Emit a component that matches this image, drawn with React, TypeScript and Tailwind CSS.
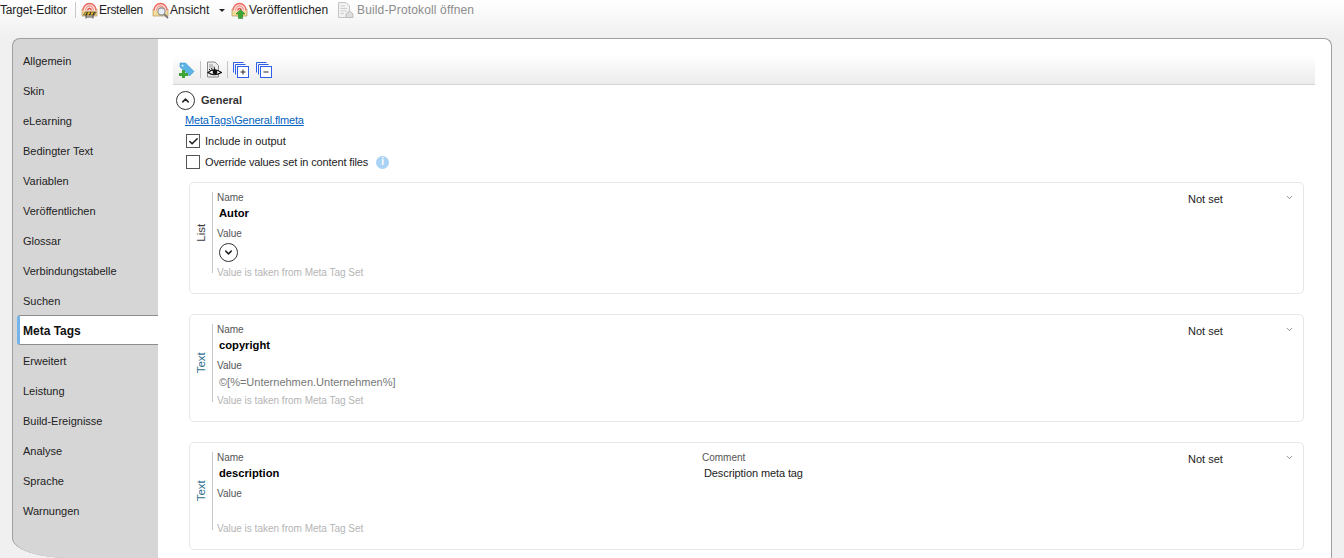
import { Check, ChevronDown, ChevronUp } from 'lucide-react';

const NAV = [
    'Allgemein',
    'Skin',
    'eLearning',
    'Bedingter Text',
    'Variablen',
    'Veröffentlichen',
    'Glossar',
    'Verbindungstabelle',
    'Suchen',
    'Meta Tags',
    'Erweitert',
    'Leistung',
    'Build-Ereignisse',
    'Analyse',
    'Sprache',
    'Warnungen',
];

/* Rainbow fan over a yellow folder, shared by the three commands; each gets its own badge. */
function TargetIcon({ badge }: { badge: 'build' | 'view' | 'publish' }) {
    return (
        <svg width="17" height="17" viewBox="0 0 17 17" className="shrink-0">
            <path d="M1 7H16V14H1Z" fill="#f5dc9a" stroke="#b3975a" strokeWidth="0.7" />
            <path d="M1.5 9A7 7.5 0 0 1 15.5 9Z" fill="#fbe3dc" />
            <path d="M2 8.5A6.5 7 0 0 1 15 8.5" fill="none" stroke="#ea6a62" strokeWidth="1.4" />
            <path d="M4.5 8.5A4 4.5 0 0 1 12.5 8.5" fill="none" stroke="#f19a90" strokeWidth="1.3" />
            <path d="M6.8 8.5A1.7 2 0 0 1 10.2 8.5" fill="none" stroke="#e5574f" strokeWidth="1.3" />
            {badge === 'build' && (
                <>
                    <path d="M4 10H15L13.5 13H2.5Z" fill="#f2c230" stroke="#333" strokeWidth="0.6" />
                    <path d="M6.5 10.3 5 13M10 10.3 8.5 13M13.5 10.3 12 13" stroke="#222" strokeWidth="1.1" />
                    <path d="M5 13V16.5M12 13V16.5M5 15H12" stroke="#444" strokeWidth="0.9" fill="none" />
                </>
            )}
            {badge === 'view' && (
                <>
                    <circle cx="9.5" cy="9.5" r="3.6" fill="#e6eef6" stroke="#8c8c8c" strokeWidth="1.1" />
                    <path d="M12.2 12.2 16 16" stroke="#777" strokeWidth="1.8" />
                </>
            )}
            {badge === 'publish' && <path d="M9.5 7.5 14 12H11.6V16.5H7.4V12H5Z" fill="#3fa535" stroke="#1f7a1f" strokeWidth="0.5" />}
        </svg>
    );
}

function LogIcon() {
    return (
        <svg width="17" height="18" viewBox="0 0 17 18" className="shrink-0">
            <path d="M1.5 1.5H9L12.5 5V16.5H1.5Z" fill="#f2f2f2" stroke="#c4c4c4" />
            <path d="M3.5 5H8M3.5 7.5H10M3.5 10H10M3.5 12.5H7" stroke="#cfcfcf" />
            <path d="M9 13 12.5 10 16 13V16.5H9Z" fill="#dcdcdc" stroke="#bdbdbd" />
        </svg>
    );
}

function AddTagIcon() {
    return (
        <svg width="16" height="16" viewBox="0 0 16 16">
            <path d="M1 1H6.5L15 9.5 10.5 14 5 8.5 1 5Z" fill="#5cb3e6" stroke="#3d93cc" strokeWidth="0.6" />
            <circle cx="3.6" cy="3.6" r="0.9" fill="#fff" />
            <path d="M3 8H6V11H9V14H6V16H3V14H0V11H3Z" fill="#3fa535" />
        </svg>
    );
}

function PreviewIcon() {
    return (
        <svg width="16" height="17" viewBox="0 0 16 17">
            <path d="M1.5 1H9L12.5 4.5V16H1.5Z" fill="#ececec" stroke="#8a8a8a" />
            <path d="M3 4H7M3 6H9" stroke="#9a9a9a" />
            <path d="M2 11.5Q8 6 15.5 11.5 8 16 2 11.5Z" fill="#fff" stroke="#111" strokeWidth="1.2" />
            <circle cx="9" cy="11" r="2.4" fill="#111" />
            <path d="M3 8 5 10M5.5 7 6.5 9.5M8.5 6.5V9" stroke="#111" />
        </svg>
    );
}

function StackIcon({ minus }: { minus?: boolean }) {
    return (
        <svg width="16" height="16" viewBox="0 0 16 16" fill="none" stroke="#2f5fe6">
            <path d="M.5 10.5V.5H10.5" />
            <path d="M2.5 12.5V2.5H12.5" />
            <rect x="4.5" y="4.5" width="11" height="11" fill="#fff" />
            <path d={minus ? 'M7.5 10H12.5' : 'M7.5 10H12.5M10 7.5V12.5'} stroke="#2a2a2a" />
        </svg>
    );
}

function RoundChevron({ up }: { up?: boolean }) {
    const Icon = up ? ChevronUp : ChevronDown;
    return (
        <span className="grid h-[19px] w-[19px] shrink-0 place-items-center rounded-full border border-[#333]">
            <Icon size={11} strokeWidth={3.2} className="text-[#222]" />
        </span>
    );
}

type Tag = {
    kind: string;
    name: string;
    value?: string;
    comment?: string;
    height: string;
    ruleHeight: string;
    valueHeight: string;
};

const TAGS: Tag[] = [
    { kind: 'List', name: 'Autor', height: 'h-[112px]', ruleHeight: 'h-[81px]', valueHeight: 'h-[27px]' },
    { kind: 'Text', name: 'copyright', value: '©[%=Unternehmen.Unternehmen%]', height: 'h-[108px]', ruleHeight: 'h-[78px]', valueHeight: 'h-[23px]' },
    { kind: 'Text', name: 'description', comment: 'Description meta tag', height: 'h-[108px]', ruleHeight: 'h-[78px]', valueHeight: 'h-[23px]' },
];

function TagCard({ tag }: { tag: Tag }) {
    return (
        <div className={`flex rounded-[5px] border border-[#e6e6e6] pt-[9px] pr-[9px] ${tag.height}`}>
            <div className={`flex w-[23px] shrink-0 items-center justify-center border-r border-[#c8c8c8] pl-[2px] ${tag.ruleHeight}`}>
                <span className={`-rotate-90 text-[11.5px] leading-none ${tag.kind === 'Text' ? 'text-[#2f6f8f]' : 'text-[#3c3c3c]'}`}>{tag.kind}</span>
            </div>
            <div className="min-w-0 flex-1 pl-[4px]">
                <div className="flex">
                    <div className="w-[485px] shrink-0">
                        <div className="text-[10px] leading-[12px] text-[#555]">Name</div>
                        <div className="mt-[1px] pl-[2px] text-[11.2px] leading-[16px] font-bold text-black">{tag.name}</div>
                    </div>
                    <div className="w-[486px] shrink-0">
                        {tag.comment && (
                            <>
                                <div className="text-[10px] leading-[12px] text-[#555]">Comment</div>
                                <div className="mt-[1px] pl-[2px] text-[11px] leading-[16px] tracking-[-0.1px] text-[#222]">{tag.comment}</div>
                            </>
                        )}
                    </div>
                    <div className="-mt-px flex flex-1 justify-between">
                        <span className="text-[11px] leading-[16px] text-[#222]">Not set</span>
                        <ChevronDown size={9} strokeWidth={2.5} className="mt-[2px] text-[#888]" />
                    </div>
                </div>
                <div className="mt-[7px] text-[10px] leading-[12px] text-[#555]">Value</div>
                <div className={`flex items-center pb-[2px] pl-[2px] text-[11px] text-[#777] ${tag.valueHeight}`}>
                    {tag.kind === 'List' ? <RoundChevron /> : tag.value}
                </div>
                <div className="text-[10px] leading-[12px] text-[#b4b4b4]">Value is taken from Meta Tag Set</div>
            </div>
        </div>
    );
}

export default function App() {
    return (
        <div className="flex h-[558px] flex-col overflow-hidden bg-[#f0f0f0] font-['Liberation_Sans',Arial,sans-serif] text-[11px]">
            {/* Command bar */}
            <div className="flex h-[38px] shrink-0 items-start bg-gradient-to-b from-white to-[#f0f0f0] pt-[1px] text-[12px] text-[#1e1e1e]">
                <div className="flex h-[18px] items-center">
                    <span className="w-[75px] tracking-[-0.15px]">Target-Editor</span>
                    <span className="h-[16px] w-px bg-[#c8c8c8]" />
                    <span className="ml-[5px] flex w-[62px] items-center gap-[1px] tracking-[-0.3px]"><TargetIcon badge="build" />Erstellen</span>
                    <span className="ml-[9px] flex w-[59px] items-center gap-[1px]"><TargetIcon badge="view" />Ansicht</span>
                    <span className="ml-[8px] h-0 w-0 border-x-[3px] border-t-[3px] border-x-transparent border-t-[#222]" />
                    <span className="ml-[6px] flex w-[98px] items-center gap-[1px]"><TargetIcon badge="publish" />Veröffentlichen</span>
                    <span className="ml-[8px] flex items-center gap-[3px] tracking-[0.15px] text-[#8c8c8c]"><LogIcon />Build-Protokoll öffnen</span>
                </div>
            </div>

            {/* Tabbed target panel */}
            <div className="mx-[12px] flex min-h-0 flex-1">
                <nav className="w-[146px] shrink-0 rounded-tl-[8px] rounded-bl-[58px_20px] border-t border-l border-[#a0a0a0] bg-[#d6d6d6] pt-[7px]">
                    {NAV.map((item) =>
                        item === 'Meta Tags' ? (
                            <div
                                key={item}
                                className="relative z-10 mb-[1px] -mt-px ml-[4px] flex h-[30px] items-center rounded-l-[3px] border-y border-[#8c8c8c] border-l-[3px] border-l-[#74b4ea] bg-white pt-[2px] pl-[3px] text-[12px] font-bold text-[#111]"
                            >
                                {item}
                            </div>
                        ) : (
                            <div key={item} className="flex h-[30px] items-center pl-[10px] text-[#222]">
                                {item}
                            </div>
                        ),
                    )}
                </nav>
                <main className="min-w-0 flex-1 rounded-tr-[8px] border-t border-r border-[#a0a0a0] bg-white pt-[16px] pr-[16px] pl-[15px]">
                    <div className="flex h-[30px] items-end gap-[3px] border-b border-[#d4d4d4] bg-gradient-to-b from-white to-[#ececec] pb-[6px] pl-[6px]">
                        <AddTagIcon />
                        <span className="mx-[2px] h-[17px] w-px bg-[#c4c4c4]" />
                        <PreviewIcon />
                        <span className="mx-[2px] h-[17px] w-px bg-[#c4c4c4]" />
                        <StackIcon />
                        <span className="w-[1px]" />
                        <StackIcon minus />
                    </div>

                    <div className="mt-[6px] flex items-center gap-[6px] pl-[3px]">
                        <RoundChevron up />
                        <span className="font-bold text-[#333]">General</span>
                    </div>
                    <a className="mt-[2px] ml-[12px] block leading-[16px] tracking-[-0.18px] text-[#0563c1] underline">MetaTags\General.flmeta</a>
                    <label className="mt-[5px] ml-[13px] flex h-[16px] items-center gap-[5px] text-[#222]">
                        <span className="grid h-[14px] w-[14px] place-items-center border border-[#555] bg-white">
                            <Check size={11} strokeWidth={3.5} className="text-[#222]" />
                        </span>
                        Include in output
                    </label>
                    <label className="mt-[5px] ml-[13px] flex h-[16px] items-center gap-[5px] tracking-[-0.14px] text-[#222]">
                        <span className="h-[14px] w-[14px] border border-[#555] bg-white" />
                        Override values set in content files
                        <span className="ml-[3px] grid h-[13px] w-[13px] place-items-center rounded-full bg-[#a9d2f5] text-[10px] leading-none font-bold text-white">i</span>
                    </label>

                    <div className="mt-[12px] ml-[16px] flex w-[1115px] flex-col gap-[20px]">
                        {TAGS.map((tag) => (
                            <TagCard key={tag.name} tag={tag} />
                        ))}
                    </div>
                </main>
            </div>
        </div>
    );
}
